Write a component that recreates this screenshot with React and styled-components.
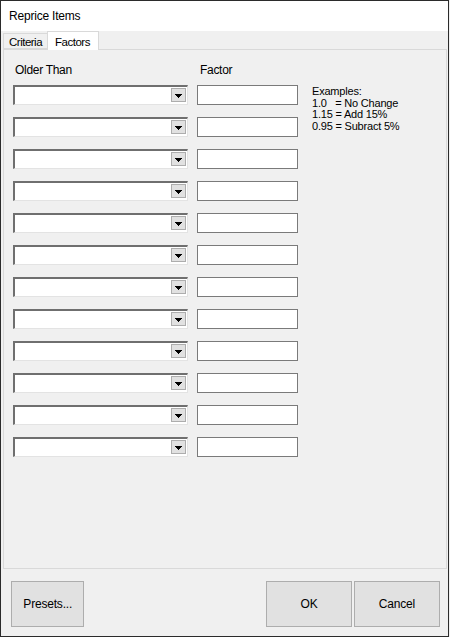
import React from "react";
import styled, { createGlobalStyle } from "styled-components";

const Global = createGlobalStyle`
  html, body { margin: 0; padding: 0; background: #f0f0f0; }
  body { font-family: "Liberation Sans", Arial, sans-serif; }
  * { box-sizing: border-box; }
`;

const Window = styled.div`
  width: 449px;
  height: 637px;
  border: 1px solid #2b2b2b;
  background: #f0f0f0;
  display: flex;
  flex-direction: column;
  color: #000;
  font-size: 12px;
`;

const TitleBar = styled.div`
  height: 30px;
  background: #fff;
  display: flex;
  align-items: center;
  padding-left: 8px;
  font-size: 12px;
  letter-spacing: -0.2px;
  padding-bottom: 1px;
`;

const Body = styled.div`
  flex: 1;
  display: flex;
  flex-direction: column;
  padding: 0 1px 0 2px;
`;

const TabStrip = styled.div`
  height: 18px;
  display: flex;
  align-items: flex-end;
  position: relative;
  z-index: 1;
`;

const Tab = styled.div`
  height: ${(p) => (p.$active ? "19px" : "16px")};
  margin-bottom: ${(p) => (p.$active ? "-1px" : "0")};
  padding: ${(p) => (p.$active ? "1px 8px 0 7px" : "1px 5px 0 5px")};
  margin-left: ${(p) => (p.$active ? "-1px" : "0")};
  background: ${(p) => (p.$active ? "#fff" : "#f0f0f0")};
  border: 1px solid #d9d9d9;
  border-bottom: ${(p) => (p.$active ? "none" : "1px solid #d9d9d9")};
  font-size: 11.5px;
  letter-spacing: -0.5px;
  display: flex;
  align-items: center;
`;

const Panel = styled.div`
  height: 520px;
  border: 1px solid #d9d9d9;
  background: #f0f0f0;
  padding: 13px 0 0 9px;
  display: flex;
  flex-direction: column;
`;

const HeaderRow = styled.div`
  display: flex;
  height: 14px;
  margin-bottom: 8px;
`;

const HeaderLabel = styled.div`
  width: ${(p) => p.$w}px;
  padding-left: ${(p) => p.$indent || 0}px;
  font-size: 12px;
  letter-spacing: -0.3px;
  line-height: 14px;
`;

const Content = styled.div`
  display: flex;
  align-items: flex-start;
`;

const Fields = styled.div`
  display: grid;
  grid-template-columns: 175px 101px;
  grid-auto-rows: 20px;
  column-gap: 9px;
  row-gap: 12px;
`;

const Combo = styled.div`
  width: 175px;
  height: 20px;
  background: #fff;
  border-top: 2px solid #6f6f6f;
  border-left: 2px solid #6f6f6f;
  border-bottom: 1px solid #e3e3e3;
  border-right: 1px solid #e3e3e3;
  display: flex;
  justify-content: flex-end;
  align-items: flex-start;
  padding: 1px 1px 0 0;
`;

const DropButton = styled.div`
  width: 15px;
  height: 14px;
  background: #e1e1e1;
  border: 1px solid #adadad;
  display: flex;
  align-items: center;
  justify-content: center;
`;

const Arrow = styled.svg`
  width: 7px;
  height: 4px;
  margin-top: 2px;
  display: block;
`;

const TextBox = styled.div`
  width: 101px;
  height: 20px;
  background: #fff;
  border: 1px solid #7a7a7a;
`;

const Examples = styled.div`
  margin-left: 14px;
  padding-top: 1px;
  font-size: 11px;
  line-height: 11.5px;
  letter-spacing: -0.2px;
  white-space: pre;
`;

const Footer = styled.div`
  flex: 1;
  display: flex;
  align-items: flex-start;
  padding: 12px 7px 0 8px;
`;

const Button = styled.div`
  width: ${(p) => p.$w}px;
  height: 46px;
  margin-left: ${(p) => p.$ml || 0}px;
  background: #e1e1e1;
  border: 1px solid #adadad;
  display: flex;
  align-items: center;
  justify-content: center;
  font-size: 12px;
  letter-spacing: -0.2px;
`;

const rows = Array.from({ length: 12 }, (_, i) => i);

export default function App() {
  return (
    <>
      <Global />
      <Window>
        <TitleBar>Reprice Items</TitleBar>
        <Body>
          <TabStrip>
            <Tab>Criteria</Tab>
            <Tab $active>Factors</Tab>
          </TabStrip>
          <Panel>
            <HeaderRow>
              <HeaderLabel $w={184} $indent={2}>Older Than</HeaderLabel>
              <HeaderLabel $w={100} $indent={3}>Factor</HeaderLabel>
            </HeaderRow>
            <Content>
              <Fields>
                {rows.map((i) => (
                  <React.Fragment key={i}>
                    <Combo>
                      <DropButton>
                        <Arrow viewBox="0 0 7 4" shapeRendering="crispEdges">
                          <path d="M0 0h7v1H0zM1 1h5v1H1zM2 2h3v1H2zM3 3h1v1H3z" fill="#000" />
                        </Arrow>
                      </DropButton>
                    </Combo>
                    <TextBox />
                  </React.Fragment>
                ))}
              </Fields>
              <Examples>
                {"Examples:\n1.0   = No Change\n1.15 = Add 15%\n0.95 = Subract 5%"}
              </Examples>
            </Content>
          </Panel>
          <Footer>
            <Button $w={74}>Presets...</Button>
            <Button $w={86} $ml={182}>OK</Button>
            <Button $w={87} $ml={2}>Cancel</Button>
          </Footer>
        </Body>
      </Window>
    </>
  );
}
